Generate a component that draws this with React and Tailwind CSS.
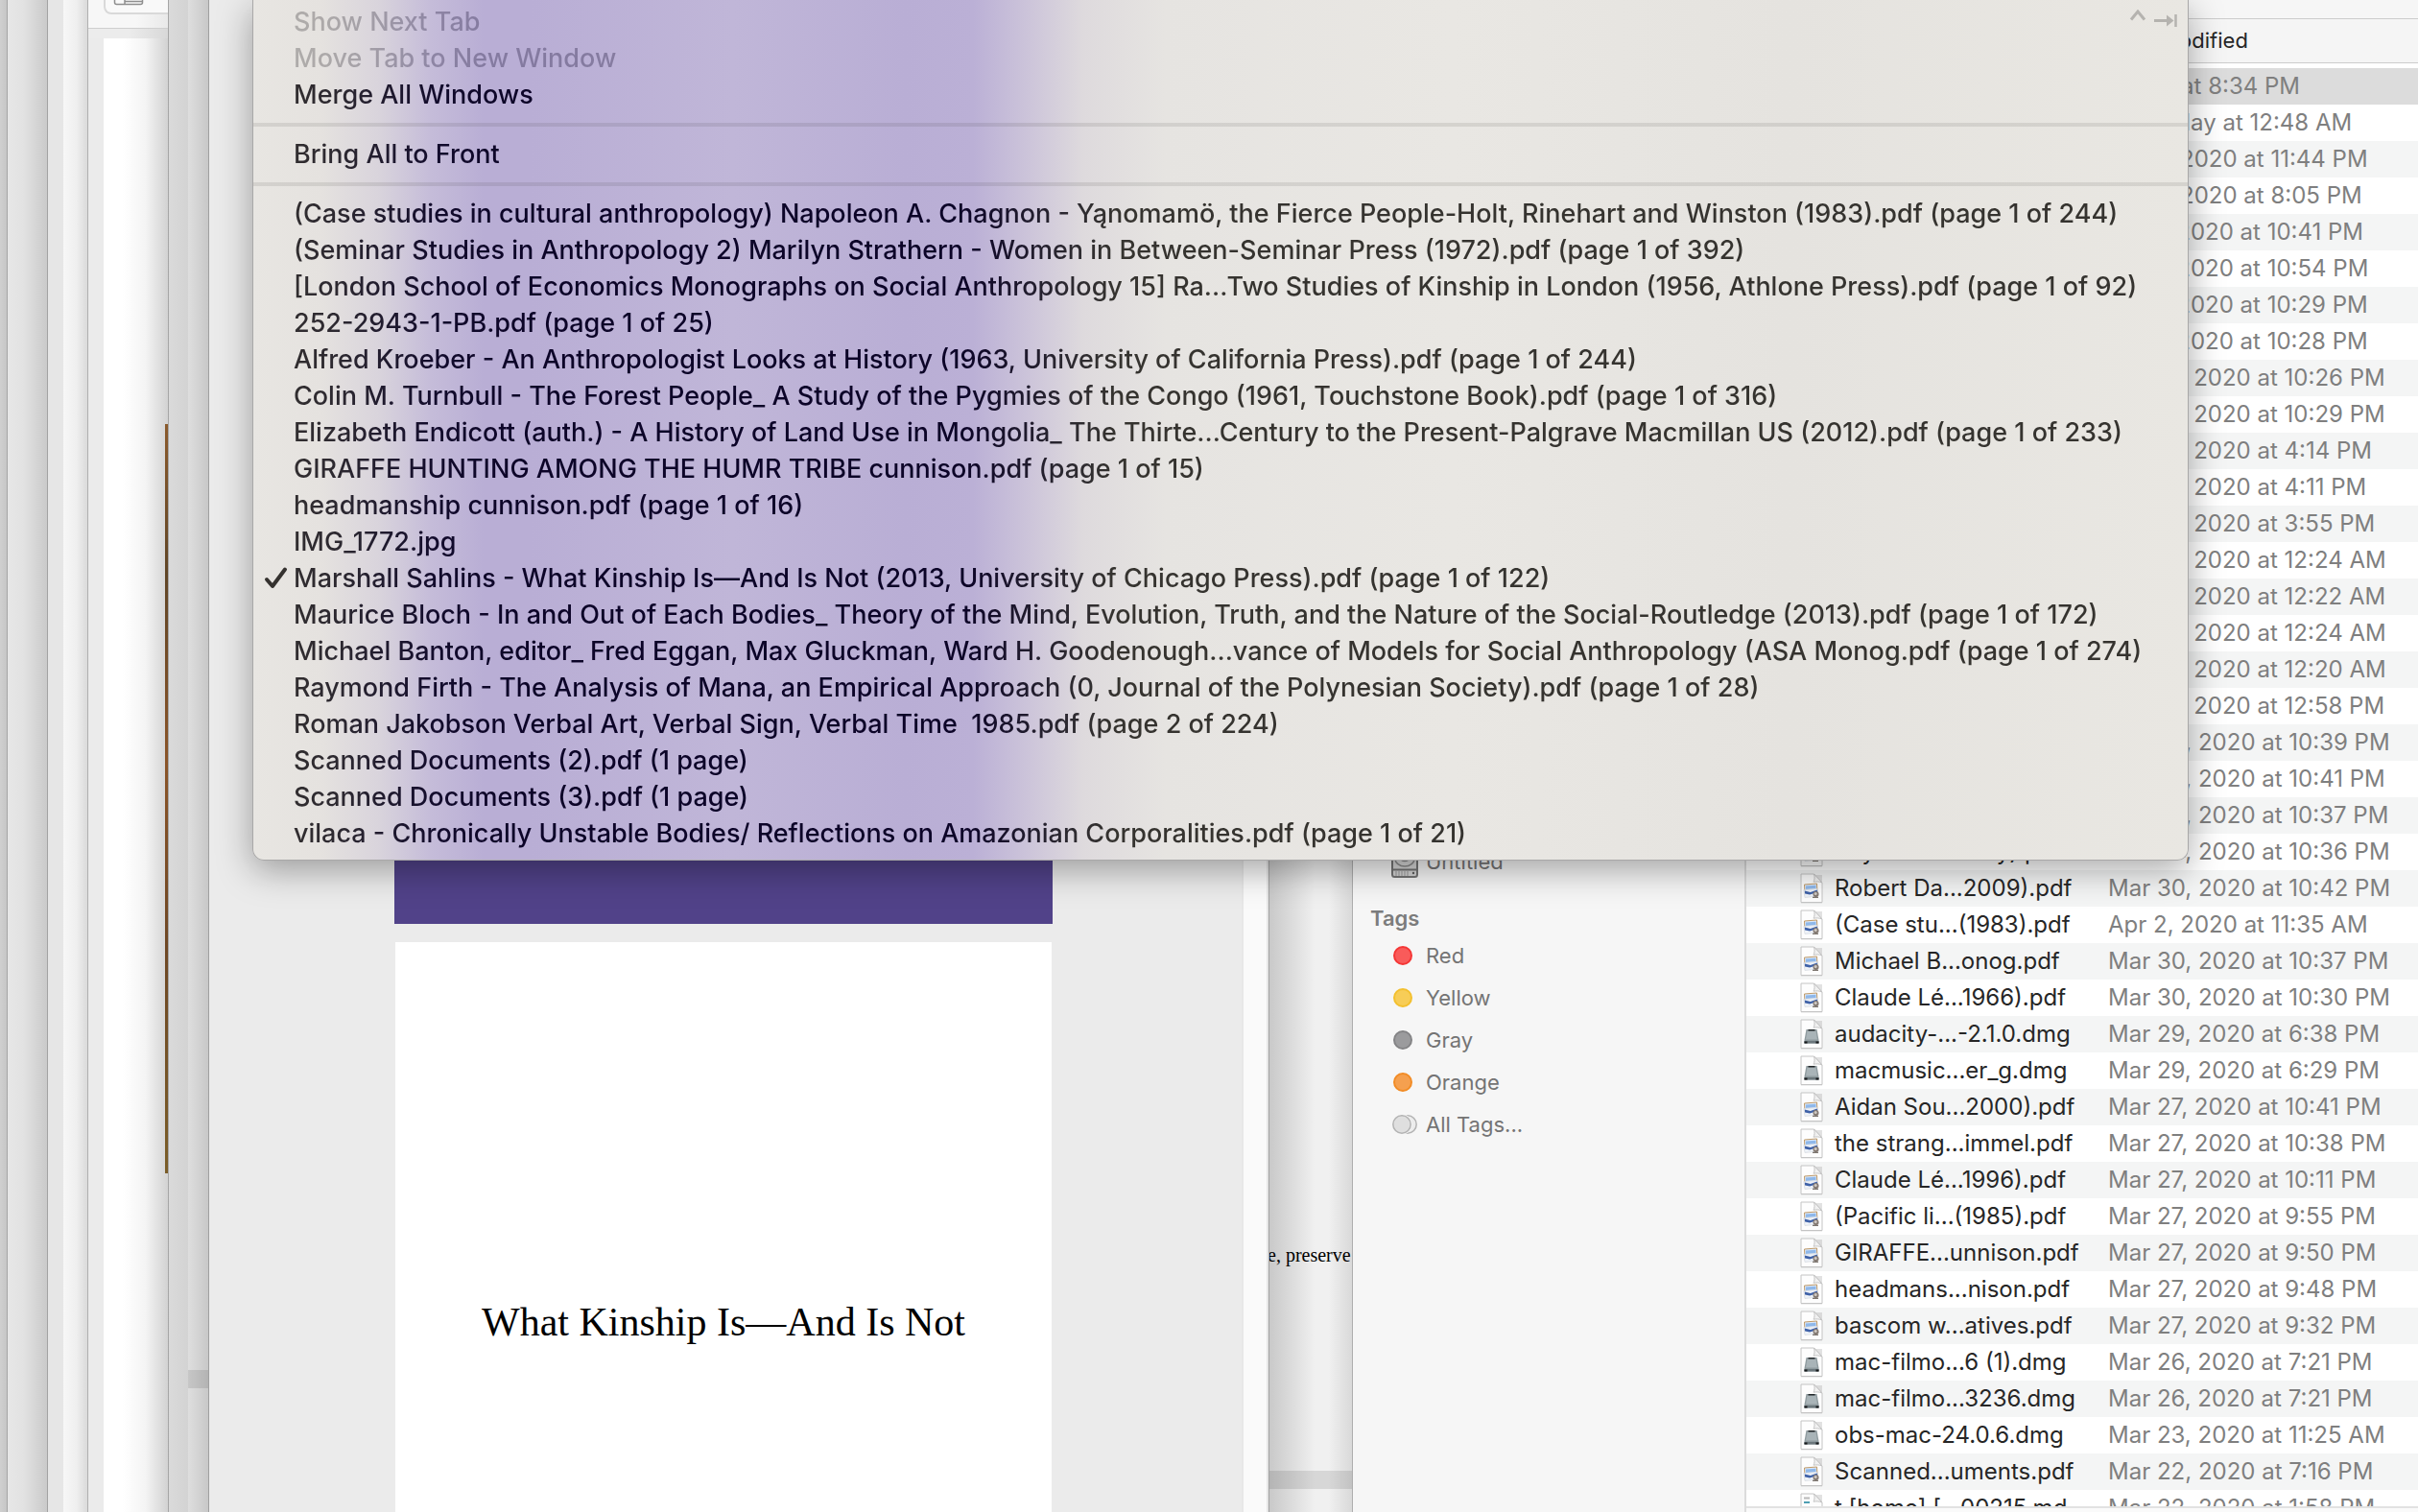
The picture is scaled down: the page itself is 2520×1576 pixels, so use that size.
import React from "react";

const menuText =
  "bg-clip-text text-transparent bg-[linear-gradient(90deg,#35322f_0px,#2c2830_90px,#120b2c_190px,#0c0428_280px,#0c0428_740px,#2c2930_850px,#35332f_900px)]";

const openDocuments = [
  "(Case studies in cultural anthropology) Napoleon A. Chagnon - Yąnomamö, the Fierce People-Holt, Rinehart and Winston (1983).pdf (page 1 of 244)",
  "(Seminar Studies in Anthropology 2) Marilyn Strathern - Women in Between-Seminar Press (1972).pdf (page 1 of 392)",
  "[London School of Economics Monographs on Social Anthropology 15] Ra...Two Studies of Kinship in London (1956, Athlone Press).pdf (page 1 of 92)",
  "252-2943-1-PB.pdf (page 1 of 25)",
  "Alfred Kroeber - An Anthropologist Looks at History (1963, University of California Press).pdf (page 1 of 244)",
  "Colin M. Turnbull - The Forest People_ A Study of the Pygmies of the Congo (1961, Touchstone Book).pdf (page 1 of 316)",
  "Elizabeth Endicott (auth.) - A History of Land Use in Mongolia_ The Thirte...Century to the Present-Palgrave Macmillan US (2012).pdf (page 1 of 233)",
  "GIRAFFE HUNTING AMONG THE HUMR TRIBE cunnison.pdf (page 1 of 15)",
  "headmanship cunnison.pdf (page 1 of 16)",
  "IMG_1772.jpg",
  "Marshall Sahlins - What Kinship Is—And Is Not (2013, University of Chicago Press).pdf (page 1 of 122)",
  "Maurice Bloch - In and Out of Each Bodies_ Theory of the Mind, Evolution, Truth, and the Nature of the Social-Routledge (2013).pdf (page 1 of 172)",
  "Michael Banton, editor_ Fred Eggan, Max Gluckman, Ward H. Goodenough...vance of Models for Social Anthropology (ASA Monog.pdf (page 1 of 274)",
  "Raymond Firth - The Analysis of Mana, an Empirical Approach (0, Journal of the Polynesian Society).pdf (page 1 of 28)",
  "Roman Jakobson Verbal Art, Verbal Sign, Verbal Time  1985.pdf (page 2 of 224)",
  "Scanned Documents (2).pdf (1 page)",
  "Scanned Documents (3).pdf (1 page)",
  "vilaca - Chronically Unstable Bodies/ Reflections on Amazonian Corporalities.pdf (page 1 of 21)",
];
const activeDocument = 10;

const files = [
  ["", "", "Today at 8:34 PM"],
  ["", "", "Yesterday at 12:48 AM"],
  ["", "", "Apr 8, 2020 at 11:44 PM"],
  ["", "", "Apr 8, 2020 at 8:05 PM"],
  ["", "", "Apr 7, 2020 at 10:41 PM"],
  ["", "", "Apr 7, 2020 at 10:54 PM"],
  ["", "", "Apr 7, 2020 at 10:29 PM"],
  ["", "", "Apr 7, 2020 at 10:28 PM"],
  ["", "", "Mar 31, 2020 at 10:26 PM"],
  ["", "", "Mar 31, 2020 at 10:29 PM"],
  ["", "", "Mar 31, 2020 at 4:14 PM"],
  ["", "", "Mar 31, 2020 at 4:11 PM"],
  ["", "", "Mar 31, 2020 at 3:55 PM"],
  ["", "", "Mar 31, 2020 at 12:24 AM"],
  ["", "", "Mar 31, 2020 at 12:22 AM"],
  ["", "", "Mar 31, 2020 at 12:24 AM"],
  ["", "", "Mar 31, 2020 at 12:20 AM"],
  ["", "", "Mar 31, 2020 at 12:58 PM"],
  ["", "", "Mar 30, 2020 at 10:39 PM"],
  ["", "", "Mar 30, 2020 at 10:41 PM"],
  ["", "", "Mar 30, 2020 at 10:37 PM"],
  ["pdf", "Raymond...ciety).pdf", "Mar 30, 2020 at 10:36 PM"],
  ["pdf", "Robert Da...2009).pdf", "Mar 30, 2020 at 10:42 PM"],
  ["pdf", "(Case stu...(1983).pdf", "Apr 2, 2020 at 11:35 AM"],
  ["pdf", "Michael B...onog.pdf", "Mar 30, 2020 at 10:37 PM"],
  ["pdf", "Claude Lé...1966).pdf", "Mar 30, 2020 at 10:30 PM"],
  ["dmg", "audacity-...-2.1.0.dmg", "Mar 29, 2020 at 6:38 PM"],
  ["dmg", "macmusic...er_g.dmg", "Mar 29, 2020 at 6:29 PM"],
  ["pdf", "Aidan Sou...2000).pdf", "Mar 27, 2020 at 10:41 PM"],
  ["pdf", "the strang...immel.pdf", "Mar 27, 2020 at 10:38 PM"],
  ["pdf", "Claude Lé...1996).pdf", "Mar 27, 2020 at 10:11 PM"],
  ["pdf", "(Pacific li...(1985).pdf", "Mar 27, 2020 at 9:55 PM"],
  ["pdf", "GIRAFFE...unnison.pdf", "Mar 27, 2020 at 9:50 PM"],
  ["pdf", "headmans...nison.pdf", "Mar 27, 2020 at 9:48 PM"],
  ["pdf", "bascom w...atives.pdf", "Mar 27, 2020 at 9:32 PM"],
  ["dmg", "mac-filmo...6 (1).dmg", "Mar 26, 2020 at 7:21 PM"],
  ["dmg", "mac-filmo...3236.dmg", "Mar 26, 2020 at 7:21 PM"],
  ["dmg", "obs-mac-24.0.6.dmg", "Mar 23, 2020 at 11:25 AM"],
  ["pdf", "Scanned...uments.pdf", "Mar 22, 2020 at 7:16 PM"],
  ["md", "t [home] [...00215.md", "Mar 22, 2020 at 1:58 PM"],
];

const tags = [
  ["Red", "bg-[#f95b5a] border-[#f43635]"],
  ["Yellow", "bg-[#f7cd57] border-[#f3c02f]"],
  ["Gray", "bg-[#9b9b9d] border-[#848486]"],
  ["Orange", "bg-[#f5a04f] border-[#f28c26]"],
];

function FileIcon({ kind }) {
  return (
    <svg width="24" height="32" viewBox="0 0 24 32" className="shrink-0" aria-hidden="true">
      <path d="M1 2h22v29.500H1z" fill="#8a8a8a" opacity="0.25" />
      <path d="M1 1h13.500L23 10v20.500H1z" fill="#fdfdfd" stroke="#c4c4c4" strokeWidth="1" />
      <path d="M14.500 1c1 3 .6 6-.4 8.200 2.900-.6 6-.4 8.900.8z" fill="#f1f1f1" stroke="#c4c4c4" strokeWidth="1" />
      {kind === "pdf" && (
        <g>
          <path d="M4.500 12l13-1 .5 9-13 1z" fill="#d9e8fa" stroke="#c09a68" strokeWidth="1" />
          <path d="M6 13.500l10.500-.8v3.300L6 17z" fill="#8fb8ea" />
          <path d="M3.800 17.500l14.400-1 .8 7.500-14 1.500z" fill="#eef2f8" stroke="#cfd3da" strokeWidth="0.600" />
          <path d="M4.800 18.500l6 1.500 7-2.500.3 2.500-8 2.500-5-1z" fill="#3f62a8" />
          <circle cx="16.500" cy="22" r="3" fill="#857a72" />
          <circle cx="16.200" cy="21.500" r="1.500" fill="#cfcac5" />
          <path d="M13 25.300h6" stroke="#5d544c" strokeWidth="1" />
        </g>
      )}
      {kind === "dmg" && (
        <g>
          <path d="M6.500 11h11l2 11v3.500h-15V22z" fill="#8f9b9f" />
          <path d="M7.500 12.500h9l1.500 9H6z" fill="#a9b4b8" />
          <path d="M8.500 11h7v1.500h-7z" fill="#23282a" />
          <path d="M4.500 23h15v2.500h-15z" fill="#6b777c" />
          <path d="M4.500 23.500h3v2h-3zM16.500 23.500h3v2h-3z" fill="#16191a" />
        </g>
      )}
      {kind === "md" && (
        <g>
          <path d="M4 5.500h6" stroke="#b9b9b9" strokeWidth="2" />
          <path d="M4 10h6" stroke="#4e9fb3" strokeWidth="2" />
          <path d="M4 15h15M4 19h12" stroke="#d88a94" strokeWidth="2" />
        </g>
      )}
    </svg>
  );
}

function DriveIcon() {
  return (
    <svg width="28" height="36" viewBox="0 0 28 36" className="shrink-0" aria-hidden="true">
      <rect x="1" y="1" width="26" height="33" rx="2.500" fill="#d6d6d6" stroke="#757575" strokeWidth="2" />
      <ellipse cx="14" cy="15" rx="10" ry="8" fill="none" stroke="#8a8a8a" strokeWidth="1.500" />
      <ellipse cx="14" cy="15" rx="3.500" ry="2.500" fill="none" stroke="#8a8a8a" strokeWidth="1.500" />
      <path d="M1 26.500h26" stroke="#757575" strokeWidth="2" />
      <path d="M5 28v5M8 28v5M11 28v5M14 28v5M17 28v5" stroke="#9a9a9a" strokeWidth="1" />
      <circle cx="23" cy="30" r="1.200" fill="#5f5f5f" />
    </svg>
  );
}

function AllTagsIcon() {
  return (
    <svg width="28" height="22" viewBox="0 0 28 22" className="shrink-0" aria-hidden="true">
      <circle cx="17" cy="11" r="9.200" fill="#ececec" stroke="#b3b3b3" strokeWidth="1.500" />
      <circle cx="11" cy="11" r="9.200" fill="#dfdfdf" stroke="#f6f6f6" strokeWidth="3" />
      <circle cx="11" cy="11" r="9.200" fill="#dfdfdf" stroke="#b3b3b3" strokeWidth="1.500" />
    </svg>
  );
}

function MenuItem({ label, disabled, checked, shortcut }) {
  return (
    <li role="none" className="relative">
      <button
        type="button"
        role={checked ? "menuitemradio" : "menuitem"}
        aria-checked={checked ? true : undefined}
        disabled={disabled}
        className={`block h-[38px] w-full whitespace-pre pl-[42px] text-left text-[27px] leading-[38px] font-medium ${menuText} ${disabled ? "opacity-30" : ""}`}
      >
        {label}
      </button>
      {checked && (
        <svg width="26" height="26" viewBox="0 0 26 26" className="absolute top-[6px] left-[11px]" aria-hidden="true">
          <path d="M3 14l6 7L22 3.500" fill="none" stroke="#35322f" strokeWidth="4" strokeLinecap="round" strokeLinejoin="round" />
        </svg>
      )}
      {shortcut && (
        <svg width="50" height="20" viewBox="0 0 50 20" className="absolute top-[6px] right-[11px]" aria-hidden="true">
          <path d="M2 10.500l7-8.500 7 8.500" fill="none" stroke="#b5b3af" strokeWidth="3" />
          <path d="M26 11.500h15" stroke="#b5b3af" strokeWidth="3" />
          <path d="M39 5.500l7.500 6-7.500 6z" fill="#b5b3af" />
          <path d="M48.500 5v13" stroke="#b5b3af" strokeWidth="2.500" />
        </svg>
      )}
    </li>
  );
}

function MenuSeparator() {
  return (
    <li role="separator" className="h-6 pt-[10px]">
      <div className="h-1 bg-[#2a2620]/10" />
    </li>
  );
}

function WindowMenu() {
  return (
    <ul
      role="menu"
      aria-label="Window"
      className="absolute top-0 left-[263px] w-[2018px] rounded-b-xl border-x border-b border-[#a9a8a8] bg-[linear-gradient(90deg,#e8e6e2_0px,#e5e2df_70px,#d9d4dc_130px,#c5bcd9_185px,#b9aed5_240px,#b9aed5_290px,#c0b6d8_500px,#b9aed5_680px,#bbb0d6_750px,#cdc5da_810px,#dedadd_865px,#e6e4e1_950px,#e9e7e3_1250px,#e5e3df_1600px,#e9e7e2_2017px)] pt-1 pb-2 shadow-[0_10px_36px_rgba(0,0,0,0.34)]"
    >
      <MenuItem label="Show Next Tab" disabled shortcut />
      <MenuItem label="Move Tab to New Window" disabled />
      <MenuItem label="Merge All Windows" />
      <MenuSeparator />
      <MenuItem label="Bring All to Front" />
      <MenuSeparator />
      {openDocuments.map((name, i) => (
        <MenuItem key={name} label={name} checked={i === activeDocument} />
      ))}
    </ul>
  );
}

function StackedWindows() {
  return (
    <div className="flex shrink-0" aria-hidden="true">
      <div className="w-2 border-r border-[#a6a6a6] bg-[linear-gradient(90deg,#d0d0d0,#c6c6c6)]" />
      <div className="w-[42px] border-r border-[#a3a3a3] bg-[linear-gradient(90deg,#e7e7e7_0%,#e2e2e2_40%,#cacaca_100%)]" />
      <div className="w-4 bg-[#e6e6e6]" />
      <div className="w-[26px] border-r border-[#b0b0b0] bg-[linear-gradient(90deg,#f7f7f7_0%,#efefef_55%,#dadada_100%)]" />
      <div className="flex w-[84px] flex-col border-r border-[#a6a6a6] bg-[#ebebeb]">
        <div className="h-[30px] overflow-hidden border-b border-[#cfcfcf] bg-[linear-gradient(90deg,#f7f7f7_60%,#e9e9e9)] pl-4">
          <div className="h-[15px] rounded-bl-lg border-b-2 border-l-2 border-[#d9d9d9] bg-[#f9f9f9] pl-2">
            <svg width="32" height="6" viewBox="0 0 32 6">
              <path d="M1.500 0v2.500q0 2 2 2h25q2 0 2-2V0M12 0v4.500M12 1.500h18" fill="none" stroke="#8f8f8f" strokeWidth="1.500" />
            </svg>
          </div>
        </div>
        <div className="h-[10px] bg-[linear-gradient(90deg,#ececec_50%,#d8d8d8)]" />
        <div className="ml-4 flex flex-1 flex-col items-end bg-[linear-gradient(90deg,#ffffff_30%,#f4f4f4_65%,#d2d2d2_100%)]">
          <div className="mt-[402px] h-[781px] w-[3px] bg-[linear-gradient(180deg,#8a5a2c,#5f4526_20%,#8a5428_45%,#6d4724_70%,#7a5d28)]" />
        </div>
      </div>
      <div className="w-5 bg-[linear-gradient(90deg,#dadada,#d3d3d3)]" />
      <div className="flex w-[22px] flex-col border-r border-[#a0a0a0] bg-[linear-gradient(90deg,#dedede,#c8c8c8)]">
        <div className="mt-[1428px] h-[19px] bg-black/10" />
      </div>
    </div>
  );
}

function PreviewWindow() {
  return (
    <main className="flex w-[1105px] shrink-0 border-r border-[#a2a2a2]">
      <div className="flex flex-1 flex-col items-center gap-[19px] bg-[#ebebeb] pr-1">
        <div className="h-[963px] w-[686px] shrink-0 bg-[#514289]" />
        <article className="w-[684px] flex-1 bg-white pt-[366px] text-center">
          <h1 className="font-['Liberation_Serif',serif] text-[42px] leading-[60px] text-black">
            What Kinship Is—And Is Not
          </h1>
        </article>
      </div>
      <div className="w-7 border-r-2 border-l-2 border-[#e7e7e7] bg-[#fafafa]" />
    </main>
  );
}

function BackDocument() {
  return (
    <section className="flex w-[87px] shrink-0 flex-col overflow-hidden border-r border-[#adadad] bg-[linear-gradient(90deg,#c9c9c9_0%,#dedede_30%,#f0f0f0_55%,#f0f0f0_72%,#d9d9d9_100%)]">
      <p className="mt-[1292px] indent-[-2px] font-['Liberation_Serif',serif] text-[20px] leading-[32px] whitespace-nowrap text-black">
        e, preserve
      </p>
      <div className="mt-[209px] h-[19px] shrink-0 bg-black/10" />
    </section>
  );
}

function Sidebar() {
  return (
    <nav aria-label="Sidebar" className="w-[410px] shrink-0 border-r-2 border-[#dcdcdc] bg-[#f6f6f6] pt-[876px] pl-[18px] text-[22px] text-[#747474]">
      <a href="#untitled" className="flex h-11 items-center gap-2 pl-[22px]">
        <DriveIcon />
        Untitled
      </a>
      <h2 className="mb-0.5 flex h-[52px] items-end leading-[30px] font-semibold text-[#7c7c7c]">Tags</h2>
      {tags.map(([name, color]) => (
        <a key={name} href={`#${name.toLowerCase()}`} className="flex h-11 items-center gap-[14px] pl-6">
          <span className={`size-5 rounded-full border-2 ${color}`} />
          {name}
        </a>
      ))}
      <a href="#all-tags" className="flex h-11 items-center gap-2 pl-[22px]">
        <AllTagsIcon />
        All Tags...
      </a>
    </nav>
  );
}

function FileList() {
  return (
    <section className="flex min-w-0 flex-1 flex-col">
      <div className="h-5 shrink-0 border-b border-[#cccccc] bg-[#f6f6f6]" />
      <div className="min-h-0 flex-1 overflow-hidden bg-white">
        <table className="w-full table-fixed border-separate border-spacing-0 text-[24px] whitespace-nowrap">
          <thead>
            <tr>
              <th scope="col" aria-label="Name" className="w-[377px] bg-white p-0 pb-[5px]">
                <div className="h-[46px] border-b border-[#cccccc] bg-[#f5f5f5]" />
              </th>
              <th scope="col" className="bg-white p-0 pb-[5px] text-left text-[22px] font-normal text-[#262626]">
                <div className="h-[46px] border-b border-[#cccccc] bg-[#f5f5f5] leading-[45px]">Date Modified</div>
              </th>
            </tr>
          </thead>
          <tbody>
            {files.map(([kind, name, date], i) => (
              <tr key={i} className={i === 0 ? "bg-[#dcdcdc]" : i % 2 === 0 ? "bg-[#f4f5f5]" : "bg-white"}>
                <td className="h-[38px] p-0 pl-14">
                  {name && (
                    <div className="flex items-center gap-3 leading-[38px] text-[#262626]">
                      <FileIcon kind={kind} />
                      {name}
                    </div>
                  )}
                </td>
                <td className="h-[38px] p-0 leading-[38px] text-[#7f7f7f]">{date}</td>
              </tr>
            ))}
          </tbody>
        </table>
      </div>
      <div className="h-[6px] shrink-0 border-t-2 border-[#e2e2e2] bg-[#fafafa]" />
    </section>
  );
}

export default function App() {
  return (
    <div className="relative flex h-screen overflow-hidden bg-[#ebebeb] font-['Inter',sans-serif]">
      <StackedWindows />
      <PreviewWindow />
      <BackDocument />
      <Sidebar />
      <FileList />
      <WindowMenu />
    </div>
  );
}
